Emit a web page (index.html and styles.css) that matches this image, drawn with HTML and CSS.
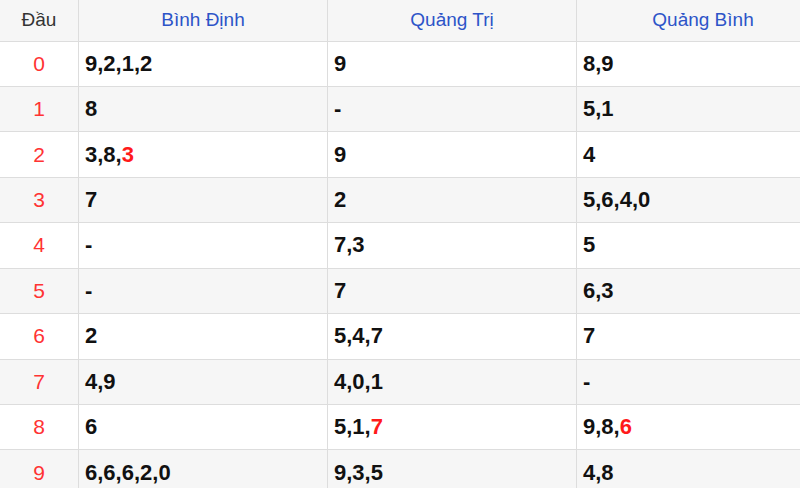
FILE: index.html
```html
<!DOCTYPE html>
<html lang="vi">
<head>
<meta charset="utf-8">
<title>Loto đầu</title>
<link rel="stylesheet" href="styles.css">
</head>
<body>
<table class="loto">
  <colgroup>
    <col class="c-head">
    <col class="c-prov">
    <col class="c-prov">
    <col class="c-last">
  </colgroup>
  <thead>
    <tr>
      <th class="dau">Đầu</th>
      <th class="prov">Bình Định</th>
      <th class="prov">Quảng Trị</th>
      <th class="prov">Quảng Bình</th>
    </tr>
  </thead>
  <tbody>
    <tr><td class="num">0</td><td class="val">9,2,1,2</td><td class="val">9</td><td class="val">8,9</td></tr>
    <tr><td class="num">1</td><td class="val">8</td><td class="val">-</td><td class="val">5,1</td></tr>
    <tr><td class="num">2</td><td class="val">3,8,<span class="hl">3</span></td><td class="val">9</td><td class="val">4</td></tr>
    <tr><td class="num">3</td><td class="val">7</td><td class="val">2</td><td class="val">5,6,4,0</td></tr>
    <tr><td class="num">4</td><td class="val">-</td><td class="val">7,3</td><td class="val">5</td></tr>
    <tr><td class="num">5</td><td class="val">-</td><td class="val">7</td><td class="val">6,3</td></tr>
    <tr><td class="num">6</td><td class="val">2</td><td class="val">5,4,7</td><td class="val">7</td></tr>
    <tr><td class="num">7</td><td class="val">4,9</td><td class="val">4,0,1</td><td class="val">-</td></tr>
    <tr><td class="num">8</td><td class="val">6</td><td class="val">5,1,<span class="hl">7</span></td><td class="val">9,8,<span class="hl">6</span></td></tr>
    <tr><td class="num">9</td><td class="val">6,6,6,2,0</td><td class="val">9,3,5</td><td class="val">4,8</td></tr>
  </tbody>
</table>
</body>
</html>
```

FILE: styles.css
```css
html, body {
  margin: 0;
  padding: 0;
  background: #ffffff;
  overflow: hidden;
}

body {
  width: 800px;
  height: 488px;
  font-family: "Liberation Sans", Arial, sans-serif;
}

.loto {
  width: 830px;
  border-collapse: separate;
  border-spacing: 0;
  table-layout: fixed;
}

.c-head { width: 79px; }
.c-prov { width: 249px; }
.c-last { width: 253px; }

.loto th,
.loto td {
  padding: 0;
  border-right: 1px solid #dddddd;
  border-bottom: 1px solid #dddddd;
  vertical-align: middle;
}

.loto thead th {
  height: 40.5px;
  background: #f6f6f6;
  font-size: 19px;
  font-weight: normal;
  text-align: center;
}

.loto .dau {
  color: #333333;
}

.loto .prov {
  color: #2d54c8;
}

.loto tbody td {
  height: 44.44px;
  font-size: 22px;
}

.loto tbody tr:nth-child(even) td {
  background: #f6f6f6;
}

.loto .num {
  color: #ff3333;
  font-size: 21px;
  text-align: center;
}

.loto .val {
  color: #111111;
  font-weight: bold;
  text-align: left;
  padding-left: 6px;
}

.loto .hl {
  color: #ff1a1a;
}
```
